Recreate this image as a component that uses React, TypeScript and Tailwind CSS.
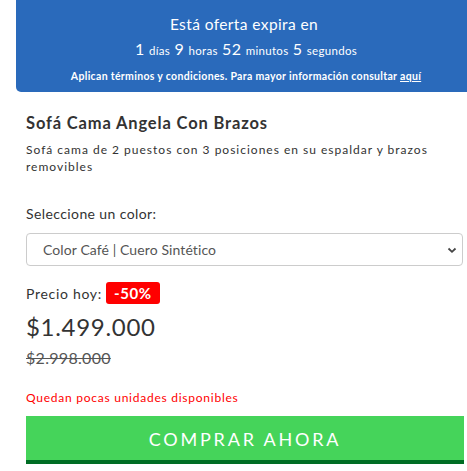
import React from 'react';

const Countdown = () => (
  <p className="mt-[5px] text-center text-white leading-none tracking-[0.3px]">
    <span className="text-[16px]">1</span> <span className="text-[11.5px]">días</span>{' '}
    <span className="text-[16px]">9</span> <span className="text-[11.5px]">horas</span>{' '}
    <span className="text-[16px]">52</span> <span className="text-[11.5px]">minutos</span>{' '}
    <span className="text-[16px]">5</span> <span className="text-[11.5px]">segundos</span>
  </p>
);

export default function App() {
  return (
    <div className="w-[467px] h-[471px] overflow-hidden bg-white font-['Lato','Liberation_Sans',sans-serif] text-[#333]">
      {/* offer banner */}
      <div className="ml-4 w-[460px] h-[92px] bg-[#2a6abb] rounded-b-[5px] pt-[12px] text-white">
        <h3 className="text-center text-[15.5px] leading-[24px] tracking-[0.4px] -ml-[4px]">Está oferta expira en</h3>
        <Countdown />
        <p className="mt-[14px] text-center text-[10.5px] font-bold tracking-[0.32px] leading-none">
          Aplican términos y condiciones. Para mayor información consultar <a className="underline">aquí</a>
        </p>
      </div>

      <div className="px-[26px] pr-[3px]">
        <h1 className="mt-[20px] text-[16.5px] font-bold leading-[22px] tracking-[0.85px] text-[#333]">Sofá Cama Angela Con Brazos</h1>
        <p className="mt-[7px] text-[12px] leading-[17px] tracking-[1px] text-[#333] pr-[10px]">
          Sofá cama de 2 puestos con 3 posiciones en su espaldar y brazos removibles
        </p>

        <p className="mt-[29px] text-[14px] leading-[20px] tracking-[0.4px] text-[#333]">Seleccione un color:</p>
        <div className="mt-[9px] w-[437px] h-[33px] border border-[#ccc] rounded-[4px] flex items-center justify-between pl-[16px] pr-[5px]">
          <span className="text-[14px] text-[#555] tracking-[0.1px]">Color Café | Cuero Sintético</span>
          <svg width="10" height="10" viewBox="0 0 10 10">
            <path d="M1.5 3.5 L5 6.8 L8.5 3.5" fill="none" stroke="#444" strokeWidth="1.8" />
          </svg>
        </div>

        <div className="mt-[16px] flex items-center gap-[4px]">
          <span className="text-[14px] tracking-[0.7px] text-[#333]">Precio hoy:</span>
          <span className="bg-[#ff0000] text-white font-bold text-[15px] rounded-[3px] px-[8px] h-[22px] flex items-center tracking-[0.6px]">-50%</span>
        </div>
        <p className="mt-[8px] text-[24px] leading-[30px] tracking-[0.7px] text-[#333]">$1.499.000</p>
        <p className="mt-[5px] text-[16px] leading-[22px] line-through text-[#555] tracking-[0.3px]">$2.998.000</p>

        <p className="mt-[21px] text-[12px] leading-[16px] tracking-[0.75px] text-[#ff0000]">Quedan pocas unidades disponibles</p>

        <button className="mt-[10px] w-[438px] h-[48px] bg-[#45d45a] border-b-4 border-[#006d24] text-white text-[18px] tracking-[2.8px] flex items-center justify-center pt-[3px]">
          COMPRAR AHORA
        </button>
      </div>
    </div>
  );
}
